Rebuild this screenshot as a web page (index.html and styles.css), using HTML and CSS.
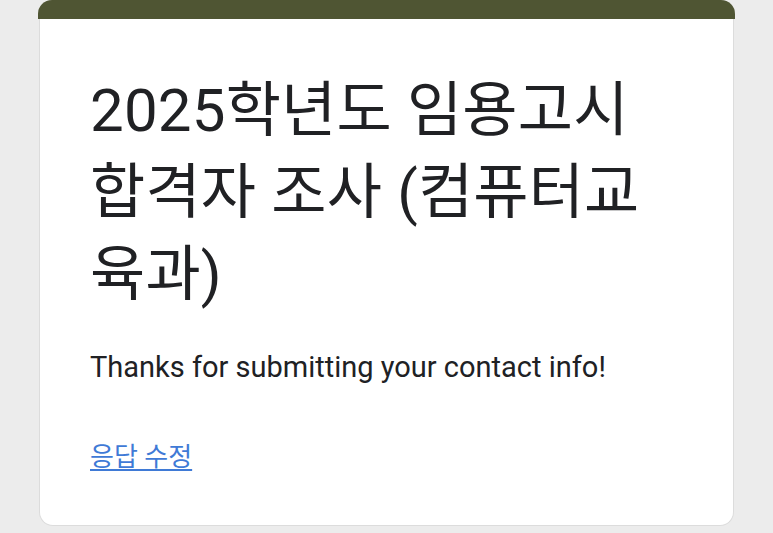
FILE: index.html
```html
<!DOCTYPE html>
<html lang="ko">
<head>
<meta charset="utf-8">
<title>2025학년도 임용고시 합격자 조사 (컴퓨터교육과)</title>
<link rel="stylesheet" href="styles.css">
</head>
<body>
<div class="page">
  <div class="form">
    <div class="form-bar"></div>
    <div class="form-card">
      <h1 class="form-title">2025학년도 임용고시 합격자 조사 (컴퓨터교육과)</h1>
      <p class="form-message">Thanks for submitting your contact info!</p>
      <a class="form-link" href="#">응답 수정</a>
    </div>
  </div>
</div>
</body>
</html>
```

FILE: styles.css
```css
html, body {
  margin: 0;
  padding: 0;
  background: #ececec;
  height: 100%;
}
body {
  font-family: Roboto, "Noto Sans CJK KR", sans-serif;
  color: #202124;
  overflow: hidden;
}
.page {
  padding: 0 38px 6px 38px;
}
.form {
  width: 697px;
}
.form-bar {
  height: 19px;
  background: #4f5533;
  border-radius: 14px 14px 0 0;
}
.form-card {
  margin: 0 1px;
  background: #fff;
  border: 1px solid #dcdcdc;
  border-top: none;
  border-radius: 0 0 14px 14px;
  height: 507px;
  box-sizing: border-box;
  padding: 51px 50px 0 50px;
}
.form-title {
  margin: 0;
  font-family: Roboto, "Noto Sans CJK KR", sans-serif;
  font-weight: 400;
  font-size: 60px;
  line-height: 82px;
  letter-spacing: 0.2px;
  max-width: 570px;
}
.form-message {
  margin: 31px 0 0 0;
  font-size: 29px;
  line-height: 40px;
}
.form-link {
  display: inline-block;
  margin-top: 50px;
  font-size: 26px;
  line-height: 40px;
  color: #3f7ad6;
  text-decoration: underline;
  text-underline-offset: 3px;
}
```
